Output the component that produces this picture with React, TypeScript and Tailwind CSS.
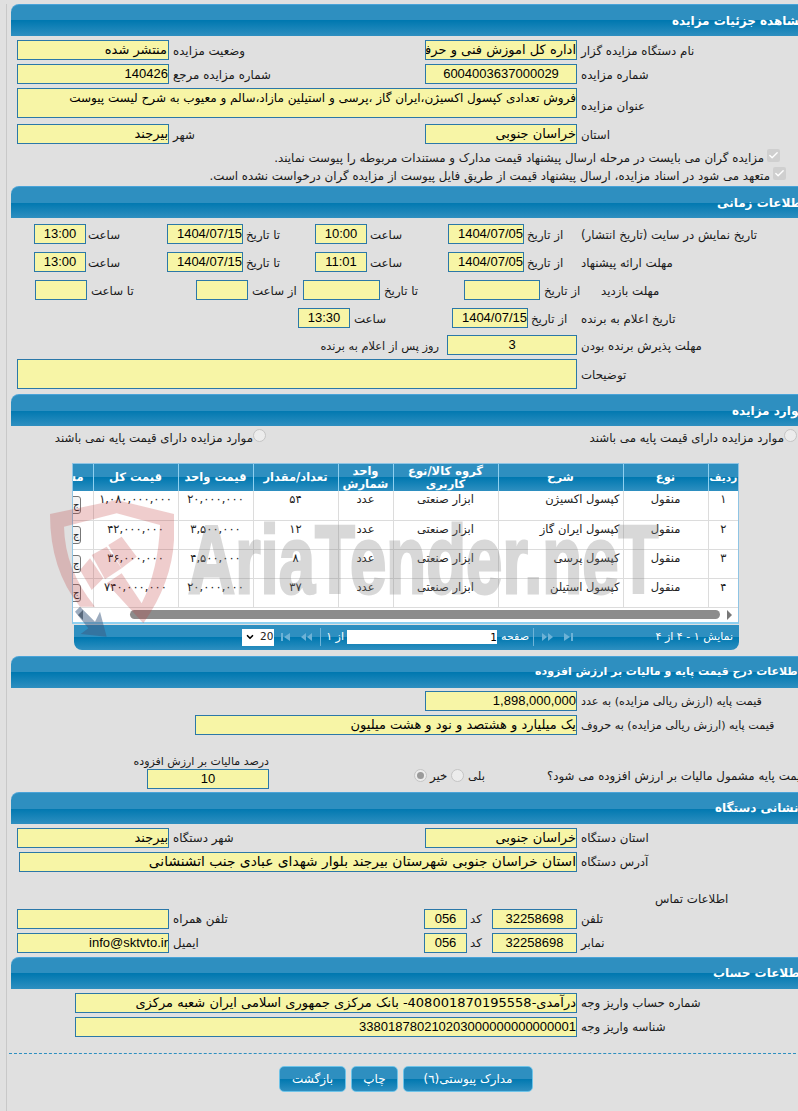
import React from 'react';
import { Check, ChevronDown } from 'lucide-react';

const barBg = "bg-[linear-gradient(to_bottom,#2e8fc0_0%,#2e8fc0_50%,#0078b0_50%,#2e8fc0_100%)]";
const latin = "font-['Liberation_Sans',sans-serif] text-[13px]";

function Section({ title, titleClass, children }: { title: string; titleClass: string; children: React.ReactNode }) {
  return (
    <section>
      <div className={`h-8 rounded-tl-lg border-t border-[#4aa3d8] flex items-center text-white font-bold text-[12px] whitespace-nowrap ${barBg} ${titleClass}`}>
        <span dir="rtl">{title}</span>
      </div>
      {children}
    </section>
  );
}

function Input({ className = '', children, center, top }: { className?: string; children?: React.ReactNode; center?: boolean; top?: boolean }) {
  return (
    <div
      dir="rtl"
      className={`shrink-0 border border-[#2b78a8] bg-[#f7f5a6] text-black text-[13px] overflow-hidden whitespace-nowrap flex ${top ? 'items-start' : 'items-center'} ${center ? 'justify-center' : ''} ${className}`}
    >
      {children}
    </div>
  );
}

function Num({ children }: { children: React.ReactNode }) {
  return <span dir="ltr" className={latin}>{children}</span>;
}

function Lbl({ className = '', children }: { className?: string; children?: React.ReactNode }) {
  return (
    <div dir="rtl" className={`shrink-0 text-left whitespace-nowrap text-[11.8px] text-[#1a1a1a] pt-[3px] ${className}`}>
      {children}
    </div>
  );
}

function Row({ className = '', children }: { className?: string; children: React.ReactNode }) {
  return <div className={`flex items-center pl-[6px] h-5 ${className}`}>{children}</div>;
}

function Tick({ className = '' }: { className?: string }) {
  return (
    <span className={`shrink-0 w-[13px] h-[13px] rounded-[2px] bg-[#cfcfcf] flex items-center justify-center ${className}`}>
      <Check size={11} strokeWidth={3} className="text-white" />
    </span>
  );
}

function Radio({ checked, className = '' }: { checked?: boolean; className?: string }) {
  return (
    <span className={`shrink-0 w-[13px] h-[13px] rounded-full border border-[#c4c4c4] bg-[#ececec] flex items-center justify-center ${className}`}>
      {checked && <span className="w-[7px] h-[7px] rounded-full bg-[#9a9a9a]" />}
    </span>
  );
}

// pager arrows, dimmed because there is only one page
function NavIcon({ kind, className = '' }: { kind: 'first' | 'prev' | 'next' | 'last'; className?: string }) {
  const d = {
    first: 'M1 1h2v8H1z M10 1v8L4 5z',
    prev: 'M6 1v8L1 5z M12 1v8L7 5z',
    next: 'M1 1v8l5-4z M7 1v8l5-4z',
    last: 'M1 1v8l6-4z M8 1h2v8H8z',
  }[kind];
  return (
    <svg width="13" height="10" viewBox="0 0 13 10" className={`shrink-0 ${className}`}>
      <path d={d} fill="#6db2d6" />
    </svg>
  );
}

const items = [
  { id: '۱', title: 'کپسول اکسیژن', qty: '۵۴', unit: '۲۰,۰۰۰,۰۰۰', total: '۱,۰۸۰,۰۰۰,۰۰۰' },
  { id: '۲', title: 'کپسول ایران گاز', qty: '۱۲', unit: '۳,۵۰۰,۰۰۰', total: '۴۲,۰۰۰,۰۰۰' },
  { id: '۳', title: 'کپسول پرسی', qty: '۸', unit: '۴,۵۰۰,۰۰۰', total: '۳۶,۰۰۰,۰۰۰' },
  { id: '۴', title: 'کپسول استیلن', qty: '۳۷', unit: '۲۰,۰۰۰,۰۰۰', total: '۷۴۰,۰۰۰,۰۰۰' },
];

function Th({ children, className = '' }: { children: React.ReactNode; className?: string }) {
  return <th dir="rtl" className={`border-r border-[#8fd0f0] last:border-r-0 text-white font-bold text-[11.5px] leading-[13px] p-0 text-center overflow-hidden ${className}`}>{children}</th>;
}

function Td({ children, className = '' }: { children?: React.ReactNode; className?: string }) {
  return <td dir="rtl" className={`border-r border-b border-[#dcdcdc] last:border-r-0 text-[11.5px] leading-[14px] text-[#222] align-top text-center p-0 whitespace-nowrap ${className}`}>{children}</td>;
}

function ItemsTable() {
  return (
    <div className="ml-[61px] mt-[16px] w-[667px]">
      <div className="border border-[#8fc4e4] border-b-2 border-b-[#8fd0f0] bg-white">
        <table className="table-fixed border-collapse w-[665px]">
          <colgroup>
            <col className="w-[20px]" />
            <col className="w-[85px]" />
            <col className="w-[75px]" />
            <col className="w-[85px]" />
            <col className="w-[55px]" />
            <col className="w-[105px]" />
            <col className="w-[125px]" />
            <col className="w-[85px]" />
            <col className="w-[30px]" />
          </colgroup>
          <thead>
            <tr className={`h-[27px] ${barBg}`}>
              <Th className="!text-right pr-[9px] whitespace-nowrap">مشاهده</Th>
              <Th>قیمت کل</Th>
              <Th>قیمت واحد</Th>
              <Th>تعداد/مقدار</Th>
              <Th>واحد شمارش</Th>
              <Th>گروه کالا/نوع کاربری</Th>
              <Th>شرح</Th>
              <Th>نوع</Th>
              <Th className="!text-[10.5px] whitespace-nowrap">ردیف</Th>
            </tr>
          </thead>
          <tbody>
            {items.map((it) => (
              <tr key={it.id} className="h-[29px]">
                <Td className="overflow-hidden">
                  <div className="mr-[12px] mt-[5px] w-4 h-[18px] border border-[#777] rounded-[3px] bg-[#f4f4f4] text-[10px] leading-[16px] text-right">ج</div>
                </Td>
                <Td className="pt-[1px]">{it.total}</Td>
                <Td className="pt-[1px]">{it.unit}</Td>
                <Td className="pt-[1px]">{it.qty}</Td>
                <Td className="pt-[1px]">عدد</Td>
                <Td className="pt-[1px]">ابزار صنعتی</Td>
                <Td className="!text-right pr-[3px] pt-[1px]">{it.title}</Td>
                <Td className="pt-[1px]">منقول</Td>
                <Td className="pt-[1px]">{it.id}</Td>
              </tr>
            ))}
          </tbody>
        </table>
        <div className="h-[14px] flex items-center pl-[5px] pr-[6px]">
          <span className="w-0 h-0 border-y-[5px] border-y-transparent border-r-[5px] border-r-[#777]" />
          <div className="ml-[47px] w-[590px] h-[9px] rounded-full bg-[#8c8c8c]" />
          <span className="ml-auto w-0 h-0 border-y-[5px] border-y-transparent border-l-[5px] border-l-[#777]" />
        </div>
      </div>
      <div dir="ltr" className={`ml-[2px] mt-[1px] h-[25px] rounded-b-lg flex items-center text-white text-[11px] ${barBg}`}>
        <div className="ml-[168px] w-[32px] h-[17px] bg-white text-[#222] flex items-center pl-[3px] gap-[5px] text-[10.5px]">
          <ChevronDown size={10} strokeWidth={4} className="text-black" />
          <span>20</span>
        </div>
        <NavIcon kind="first" className="ml-[6px]" />
        <NavIcon kind="prev" className="ml-[7px]" />
        <div className="ml-[7px] w-px h-[18px] bg-[#6fb4d8]" />
        <span dir="rtl" className="ml-[5px] w-[18px]">از ۱</span>
        <div className="ml-[3px] w-[150px] h-[14px] bg-white text-black text-right text-[10.5px] leading-[14px]">1</div>
        <span dir="rtl" className="ml-[4px] w-[28px]">صفحه</span>
        <div className="ml-[4px] w-px h-[18px] bg-[#6fb4d8]" />
        <NavIcon kind="next" className="ml-[7px]" />
        <NavIcon kind="last" className="ml-[9px]" />
        <span dir="rtl" className="ml-auto mr-[6px] whitespace-nowrap">نمایش ۱ - ۴ از ۴</span>
      </div>
    </div>
  );
}

function Watermark() {
  return (
    <div className="absolute inset-0 pointer-events-none overflow-hidden">
      <svg className="absolute left-[40px] top-[490px]" width="160" height="165" viewBox="0 0 480 495">
        <g fill="#c03c3c" opacity="0.25">
          <path d="M30 72 L230 30 L402 72 L402 150 Q395 280 310 400 L200 280 L245 250 L305 340 Q355 240 360 105 L230 70 L72 110 Q75 240 165 350 L120 350 Q30 240 30 72 Z" />
          <path d="M120 240 L150 205 L190 265 L155 300 Z" />
          <path d="M155 195 L200 170 L245 235 L195 268 Z" />
          <path d="M205 165 L245 140 L290 200 L245 235 Z" />
        </g>
        <path d="M120 350 L165 395 L180 365 L200 440 L122 432 L145 415 L105 365 Z" fill="#3a5a80" opacity="0.5" />
      </svg>
      <div
        dir="ltr"
        className="absolute left-[188px] top-[510px] text-[96px] leading-[100px] font-bold text-[#808080] opacity-30 whitespace-nowrap font-['Liberation_Sans',sans-serif] origin-left [transform:scaleX(0.68)] [-webkit-text-stroke:3px_#808080]"
      >
        AriaTender.neT
      </div>
    </div>
  );
}

export default function App() {
  return (
    <div dir="ltr" className="relative w-[798px] h-[1111px] overflow-hidden bg-[#e0e0e0] font-['DejaVu_Sans',sans-serif] pl-[6px] pt-1">
      <div className="border-l border-[#c8c8c8] pl-1 h-full w-[800px]">
        <Section title="مشاهده جزئیات مزایده" titleClass="pl-[661px]">
          <Row className="mt-1">
            <Input className="w-[152px] h-5"><span className="pr-[1px] tracking-[0.4px]">منتشر شده</span></Input>
            <Lbl className="ml-1 w-[252px]">وضعیت مزایده</Lbl>
            <Input className="w-[152px] h-5"><span>اداره کل اموزش فنی و حرفه ای خراسان جنوبی</span></Input>
            <Lbl className="ml-1">نام دستگاه مزایده گزار</Lbl>
          </Row>
          <Row className="mt-1">
            <Input className="w-[152px] h-5"><Num>140426</Num></Input>
            <Lbl className="ml-1 w-[252px]">شماره مزایده مرجع</Lbl>
            <Input center className="w-[152px] h-5"><Num>6004003637000029</Num></Input>
            <Lbl className="ml-1">شماره مزایده</Lbl>
          </Row>
          <Row className="mt-1 !h-[30px]">
            <Input top className="w-[560px] h-[30px] !text-[12px]">فروش تعدادی کپسول اکسیژن،ایران گاز ،پرسی و استیلین مازاد،سالم و معیوب به شرح لیست پیوست</Input>
            <Lbl className="ml-1 mt-[4px]">عنوان مزایده</Lbl>
          </Row>
          <Row className="mt-[6px]">
            <Input className="w-[152px] h-5">بیرجند</Input>
            <Lbl className="ml-1 w-[252px]">شهر</Lbl>
            <Input className="w-[152px] h-5">خراسان جنوبی</Input>
            <Lbl className="ml-1">استان</Lbl>
          </Row>
          <div className="flex items-center h-[18px] pl-[263px] mt-1">
            <Lbl className="w-[490px] !text-right">مزایده گران می بایست در مرحله ارسال پیشنهاد قیمت مدارک و مستندات مربوطه را پیوست نمایند.</Lbl>
            <Tick className="ml-[3px] -mt-1" />
          </div>
          <div className="flex items-center h-[18px] pl-[190px] mb-[2px]">
            <Lbl className="w-[569px] !text-right">متعهد می شود در اسناد مزایده، ارسال پیشنهاد قیمت از طریق فایل پیوست از مزایده گران درخواست نشده است.</Lbl>
            <Tick className="ml-[3px] -mt-1" />
          </div>
        </Section>

        <Section title="اطلاعات زمانی" titleClass="pl-[706px]">
          <Row className="mt-[6px]">
            <Input center className="ml-[17px] w-[52px] h-5"><Num>13:00</Num></Input>
            <Lbl className="ml-[2px] w-[79px]">ساعت</Lbl>
            <Input className="w-[76px] h-5"><Num>1404/07/15</Num></Input>
            <Lbl className="ml-[3px] w-[69px]">تا تاریخ</Lbl>
            <Input center className="w-[52px] h-5"><Num>10:00</Num></Input>
            <Lbl className="ml-[3px] w-[78px]">ساعت</Lbl>
            <Input className="w-[76px] h-5"><Num>1404/07/05</Num></Input>
            <Lbl className="ml-[3px] w-[54px]">از تاریخ</Lbl>
            <Lbl>تاریخ نمایش در سایت (تاریخ انتشار)</Lbl>
          </Row>
          <Row className="mt-2">
            <Input center className="ml-[17px] w-[52px] h-5"><Num>13:00</Num></Input>
            <Lbl className="ml-[2px] w-[79px]">ساعت</Lbl>
            <Input className="w-[76px] h-5"><Num>1404/07/15</Num></Input>
            <Lbl className="ml-[3px] w-[69px]">تا تاریخ</Lbl>
            <Input center className="w-[52px] h-5"><Num>11:01</Num></Input>
            <Lbl className="ml-[3px] w-[78px]">ساعت</Lbl>
            <Input className="w-[76px] h-5"><Num>1404/07/05</Num></Input>
            <Lbl className="ml-[3px] w-[54px]">از تاریخ</Lbl>
            <Lbl>مهلت ارائه پیشنهاد</Lbl>
          </Row>
          <Row className="mt-2">
            <Input className="ml-[18px] w-[52px] h-5" />
            <Lbl className="ml-[4px] w-[105px]">تا ساعت</Lbl>
            <Input className="w-[52px] h-5" />
            <Lbl className="ml-[4px] w-[51px]">از ساعت</Lbl>
            <Input className="w-[77px] h-5" />
            <Lbl className="ml-[4px] w-[80px]">تا تاریخ</Lbl>
            <Input className="w-[76px] h-5" />
            <Lbl className="ml-[4px] w-[57px]">از تاریخ</Lbl>
            <Lbl>مهلت بازدید</Lbl>
          </Row>
          <Row className="mt-2">
            <Input center className="ml-[281px] w-[52px] h-5"><Num>13:30</Num></Input>
            <Lbl className="ml-1 w-[98px]">ساعت</Lbl>
            <Input className="w-[76px] h-5"><Num>1404/07/15</Num></Input>
            <Lbl className="ml-[3px] w-[50px]">از تاریخ</Lbl>
            <Lbl>تاریخ اعلام به برنده</Lbl>
          </Row>
          <Row className="mt-[7px]">
            <Lbl className="ml-[300px] w-[122px] !text-right !text-[11.4px]">روز پس از اعلام به برنده</Lbl>
            <Input center className="ml-[8px] w-[130px] h-5"><Num>3</Num></Input>
            <Lbl className="ml-1">مهلت پذیرش برنده بودن</Lbl>
          </Row>
          <Row className="mt-1 !h-[30px] mb-[5px]">
            <Input className="w-[560px] h-[30px]" />
            <Lbl className="ml-1">توضیحات</Lbl>
          </Row>
        </Section>

        <Section title="موارد مزایده" titleClass="pl-[721px]">
          <div className="flex items-center h-5 mt-[1px]">
            <Lbl className="ml-[43px] w-[199px] !text-right">موارد مزایده دارای قیمت پایه نمی باشند</Lbl>
            <Radio className="-mt-1" />
            <Lbl className="ml-[322px] w-[196px] !text-right">موارد مزایده دارای قیمت پایه می باشند</Lbl>
            <Radio className="-mt-1" />
          </div>
          <ItemsTable />
        </Section>

        <div className="mt-[6px]">
          <Section title="اطلاعات درج قیمت پایه و مالیات بر ارزش افزوده" titleClass="pl-[524px] !text-[11px]">
            <Row className="mt-[3px] pl-[414px]">
              <Input className="w-[152px] h-5"><Num>1,898,000,000</Num></Input>
              <Lbl className="ml-1 !text-[11.2px]">قیمت پایه (ارزش ریالی مزایده) به عدد</Lbl>
            </Row>
            <Row className="mt-1 pl-[184px]">
              <Input className="w-[382px] h-5">یک میلیارد و هشتصد و نود و هشت میلیون</Input>
              <Lbl className="ml-1 !text-[11.2px]">قیمت پایه (ارزش ریالی مزایده) به حروف</Lbl>
            </Row>
            <div className="flex h-[35px] mt-[19px] mb-1 pl-[124px]">
              <div className="w-[134px] shrink-0 flex flex-col">
                <Lbl className="h-[15px] leading-[15px] !pt-0 !text-right !text-[11px]">درصد مالیات بر ارزش افزوده</Lbl>
                <Input center className="ml-[12px] w-[122px] h-5"><Num>10</Num></Input>
              </div>
              <div className="flex items-center mt-[8px]">
                <Radio checked className="ml-[145px]" />
                <Lbl className="ml-[3px] w-[21px]">خیر</Lbl>
                <Radio />
                <Lbl className="ml-[4px] w-[79px]">بلی</Lbl>
                <Lbl>قیمت پایه مشمول مالیات بر ارزش افزوده می شود؟</Lbl>
              </div>
            </div>
          </Section>
        </div>

        <div className="-mt-[1px]">
          <Section title="نشانی دستگاه" titleClass="pl-[704px]">
            <Row className="mt-1">
              <Input className="w-[152px] h-5">بیرجند</Input>
              <Lbl className="ml-1 w-[252px]">شهر دستگاه</Lbl>
              <Input className="w-[152px] h-5">خراسان جنوبی</Input>
              <Lbl className="ml-1">استان دستگاه</Lbl>
            </Row>
            <Row className="mt-1">
              <Input className="ml-[2px] w-[558px] h-5 !text-[13.8px]">استان خراسان جنوبی شهرستان بیرجند بلوار شهدای عبادی جنب اتشنشانی</Input>
              <Lbl className="ml-1">آدرس دستگاه</Lbl>
            </Row>
            <div className="h-[37px] pl-[644px] pt-[18px] text-[11.8px] leading-[18px] text-[#1a1a1a]" dir="ltr"><span dir="rtl">اطلاعات تماس</span></div>
            <Row>
              <Input className="w-[152px] h-5" />
              <Lbl className="ml-1 w-[251px]">تلفن همراه</Lbl>
              <Input center className="w-[43px] h-5"><Num>056</Num></Input>
              <Lbl className="ml-[3px] w-[22px]">کد</Lbl>
              <Input center className="w-[85px] h-5"><Num>32258698</Num></Input>
              <Lbl className="ml-1">تلفن</Lbl>
            </Row>
            <Row className="mt-1 mb-1">
              <Input className="w-[152px] h-5"><Num>info@sktvto.ir</Num></Input>
              <Lbl className="ml-1 w-[251px]">ایمیل</Lbl>
              <Input center className="w-[43px] h-5"><Num>056</Num></Input>
              <Lbl className="ml-[3px] w-[22px]">کد</Lbl>
              <Input center className="w-[85px] h-5"><Num>32258698</Num></Input>
              <Lbl className="ml-1">نمابر</Lbl>
            </Row>
          </Section>
        </div>

        <Section title="اطلاعات حساب" titleClass="pl-[702px]">
          <Row className="mt-1 pl-[64px]">
            <Input className="w-[502px] h-5">درآمدی-408001870195558- بانک مرکزی جمهوری اسلامی ایران شعبه مرکزی</Input>
            <Lbl className="ml-1">شماره حساب واریز وجه</Lbl>
          </Row>
          <Row className="mt-1 pl-[64px]">
            <Input className="w-[502px] h-5"><Num>338018780210203000000000000001</Num></Input>
            <Lbl className="ml-1">شناسه واریز وجه</Lbl>
          </Row>
        </Section>

        <div className="-ml-[2px] mt-4 border-t border-dashed border-[#2e8fc0]" />
        <div className="flex gap-[5px] pl-[268px] mt-[12px]" dir="ltr">
          {[
            { t: 'بازگشت', w: 'w-[67px]' },
            { t: 'چاپ', w: 'w-[47px]' },
            { t: 'مدارک پیوستی(٦)', w: 'w-[130px]' },
          ].map((b) => (
            <button key={b.t} dir="rtl" className={`h-[26px] rounded-[5px] border border-[#6ec3e8] text-white text-[12px] ${barBg} ${b.w}`}>
              {b.t}
            </button>
          ))}
        </div>
      </div>
      <Watermark />
    </div>
  );
}
